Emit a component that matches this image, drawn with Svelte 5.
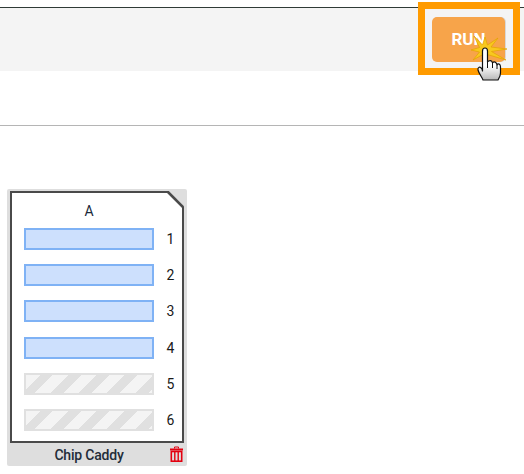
<script>
  const slots = [
    { n: 1, on: true },
    { n: 2, on: true },
    { n: 3, on: true },
    { n: 4, on: true },
    { n: 5, on: false },
    { n: 6, on: false }
  ];
</script>

<div class="page">
  <div class="toolbar">
    <button class="run">RUN</button>
    <div class="highlight"></div>
    <svg class="cursor" width="40" height="46" viewBox="0 0 40 46">
      <defs>
        <linearGradient id="hand" x1="0" y1="0" x2="0" y2="1">
          <stop offset="0.55" stop-color="#fff"/>
          <stop offset="1" stop-color="#b8b8b8"/>
        </linearGradient>
      </defs>
      <path d="M15 1 L17.5 9 L28 2 L21 11 L37 13 L21.5 15.5 L36 24 L19 19 L12 19 L3 24 L9.5 16 L1 14 L9.5 11.5 L4 0 L12.5 9 Z" fill="#f8c81e" stroke="#e3a400" stroke-width="0.7"/>
      <path d="M13 44 C12 41 9 38 8 34 C7.5 31 10 30 12 33 L12.5 35 L12.5 15 C12.5 11 17.5 11 17.5 15 L17.5 26 C19 24 22 24 22.5 27 C24 25 26.5 26 27 29 C28 27 30.5 28 30.5 31 L30.5 37 C30.5 40 29 42 28 44 Z" fill="url(#hand)" stroke="#111" stroke-width="1.2" stroke-linejoin="round"/>
      <path d="M17.5 26 V32 M22.5 27 V32 M27 29 V33" stroke="#111" stroke-width="1" fill="none"/>
    </svg>
  </div>

  <div class="spacer"></div>

  <div class="content">
    <div class="caddy">
      <div class="body">
        <svg class="corner" width="18" height="18" viewBox="0 0 18 18">
          <polygon points="2,0 18,0 18,17" fill="#dedede"/>
          <line x1="1.5" y1="0.5" x2="18" y2="17" stroke="#4a4a4a" stroke-width="2.6"/>
        </svg>
        <div class="title">A</div>
        <div class="rows">
          {#each slots as slot}
            <div class="row">
              <div class="slot" class:on={slot.on} class:off={!slot.on}></div>
              <span class="num">{slot.n}</span>
            </div>
          {/each}
        </div>
      </div>
      <div class="footer">
        <span class="name">Chip Caddy</span>
        <svg class="trash" width="13" height="16" viewBox="0 0 13 16">
          <path d="M4.5 2.5 V1 H8.5 V2.5" fill="none" stroke="#e3000f" stroke-width="1"/>
          <rect x="0" y="2.5" width="13" height="2" fill="#e3000f"/>
          <rect x="1.3" y="5.5" width="10.4" height="9.7" fill="none" stroke="#e3000f" stroke-width="1.6"/>
          <path d="M4.8 6 V15 M8.2 6 V15" stroke="#e3000f" stroke-width="1.4"/>
        </svg>
      </div>
    </div>
  </div>
</div>

<style>
  :global(body) {
    margin: 0;
    background: #fff;
    font-family: Roboto, "Liberation Sans", sans-serif;
  }

  .page {
    width: 524px;
    height: 474px;
    padding-top: 7px;
    box-sizing: border-box;
    overflow: hidden;
  }

  .toolbar {
    position: relative;
    height: 64px;
    box-sizing: border-box;
    border-top: 1px solid #2f3a36;
    background: #f4f4f4;
    display: flex;
    justify-content: flex-end;
    padding: 9px 19px 0 0;
  }

  .run {
    width: 73px;
    height: 45px;
    border: 0;
    border-radius: 5px;
    background: #f7a44a;
    box-shadow: 1px 0 0 #d8d8d8;
    color: #fff;
    font-family: Roboto, sans-serif;
    font-size: 17px;
    font-weight: 700;
    padding: 0 0 2px;
  }

  /* tutorial overlay on top of the button */
  .highlight {
    position: absolute;
    left: 418px;
    top: -6px;
    width: 102px;
    height: 73px;
    box-sizing: border-box;
    border: 7px solid #ff9b00;
  }

  .cursor {
    position: absolute;
    left: 470px;
    top: 28px;
  }

  .spacer {
    height: 54px;
    border-bottom: 1px solid #b5b5b5;
  }

  .content {
    padding: 63px 0 0 7px;
  }

  .caddy {
    width: 180px;
    height: 277px;
    background: #dedede;
    border-radius: 2px;
    padding: 2px 3px 0;
    box-sizing: border-box;
  }

  .body {
    position: relative;
    height: 252px;
    box-sizing: border-box;
    border: 2px solid #4a4a4a;
    background: #fff;
  }

  .corner {
    position: absolute;
    right: -2px;
    top: -2px;
  }

  .title {
    text-align: center;
    font-size: 14px;
    line-height: 16px;
    color: #1a2a3a;
    padding: 10px 16px 0 0;
  }

  .rows {
    display: flex;
    flex-direction: column;
    gap: 14.2px;
    padding: 9px 0 0 12px;
  }

  .row {
    display: flex;
    align-items: center;
    height: 22px;
  }

  .slot {
    width: 130px;
    height: 22px;
    box-sizing: border-box;
  }

  .slot.on {
    background: #cde0fd;
    border: 2px solid #7fb2f5;
  }

  .slot.off {
    border: 2px solid #e0e0e0;
    background: repeating-linear-gradient(135deg, #f4f4f4 0 10px, #e0e0e0 10px 19px, #f4f4f4 19px 20px);
  }

  .num {
    margin-left: 12.5px;
    font-size: 14px;
    color: #1a1a1a;
  }

  .footer {
    position: relative;
    height: 23px;
    display: flex;
    align-items: center;
    justify-content: center;
    padding-right: 16px;
  }

  .name {
    font-size: 14px;
    font-weight: 500;
    letter-spacing: -0.2px;
    color: #222c38;
  }

  .trash {
    position: absolute;
    right: 1px;
    top: 3px;
  }
</style>
